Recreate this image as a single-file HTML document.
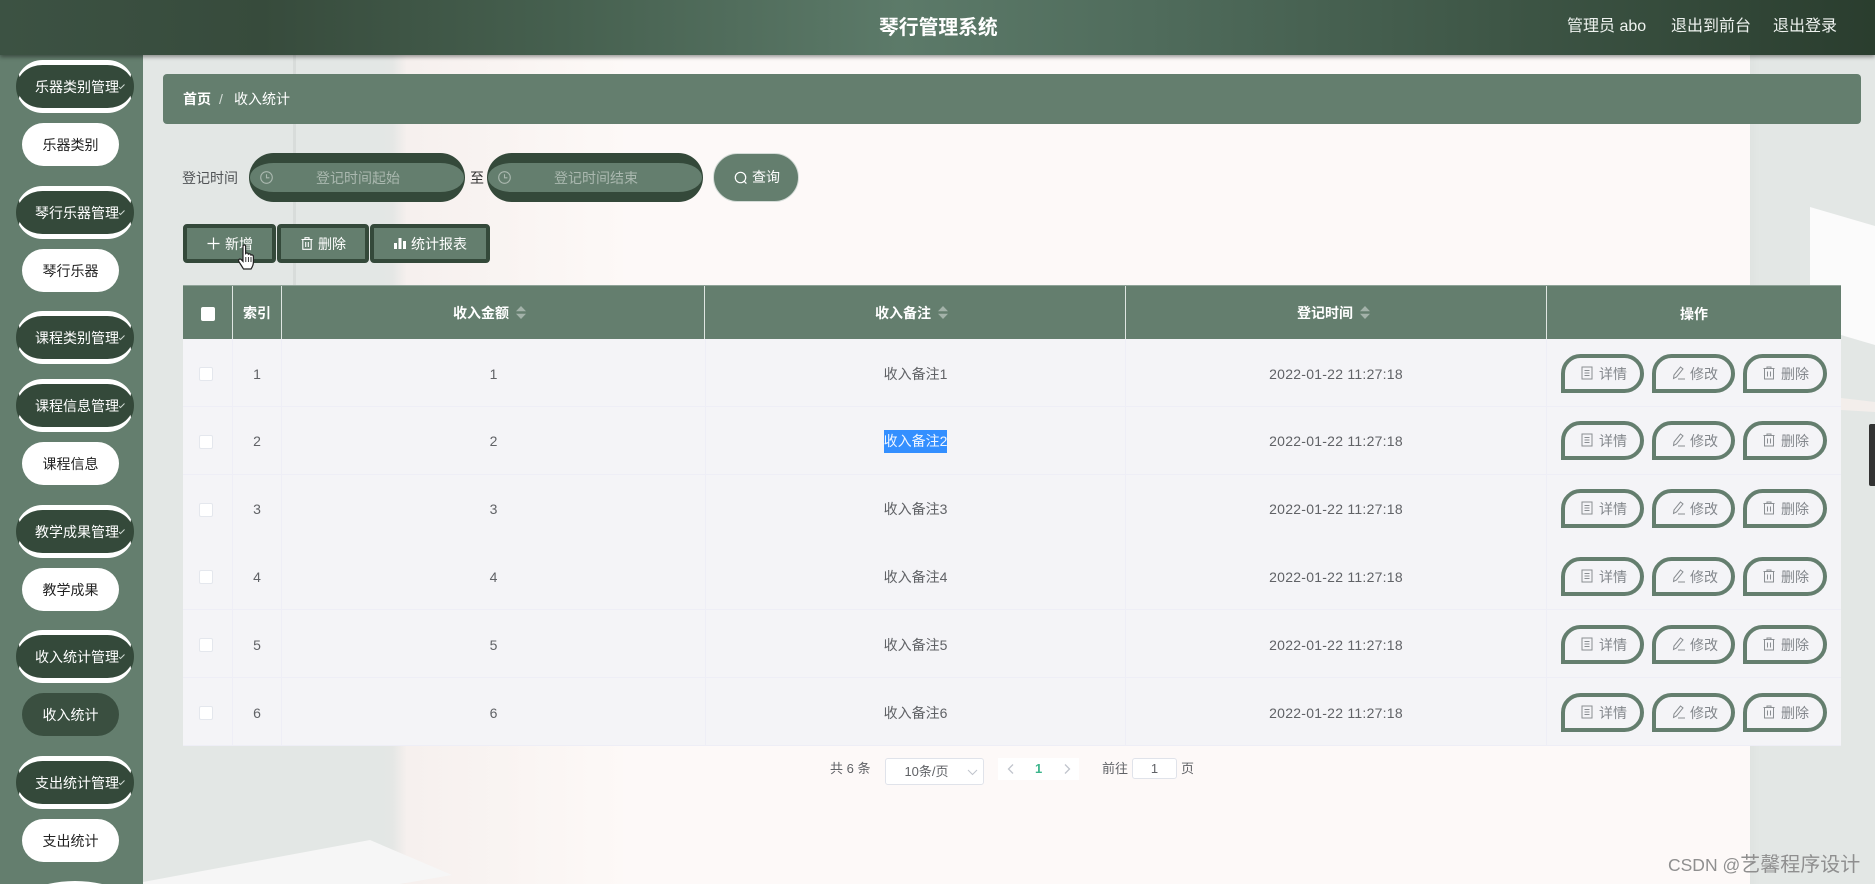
<!DOCTYPE html>
<html lang="zh">
<head>
<meta charset="utf-8">
<title>琴行管理系统</title>
<style>
*{box-sizing:border-box;margin:0;padding:0}
html,body{width:1875px;height:884px;overflow:hidden}
body{position:relative;font:14px/20px "Liberation Sans","Noto Sans CJK SC",sans-serif;color:#606266;background:#fdf9f8}
.abs,.bg,.h,.s,.t,.btn,.pill,.r,.c,.op,.cb,.hc{position:absolute}
.bg{display:block}
svg{display:block;position:absolute;overflow:visible}
.top{position:absolute;left:0;top:0;width:1875px;height:55px;background:linear-gradient(90deg,#3c5243 0,#374b3c 14%,#46604f 30%,#5c7a69 48%,#4f6b5b 62%,#3e5646 80%,#2a3d2e 100%);box-shadow:0 2px 4px rgba(0,0,0,.4);z-index:5}
.side{position:absolute;left:0;top:55px;width:143px;height:829px;background:#647e6e;z-index:4}
.h{left:16px;width:118px;height:53px;border-style:solid;border-width:5px 1px;border-color:#fff #34493a;border-radius:27px;background:#34493a;color:#fff;z-index:6;line-height:44px;padding-left:18px;white-space:nowrap;font-size:14px}
.h svg{left:102px;top:19px}
.s{left:22px;width:97px;height:43px;border-radius:22px;background:#fff;color:#222;text-align:center;line-height:44px;z-index:6}
.s.on{background:#3a4f40;color:#fff}
.t{white-space:nowrap;color:#fff;z-index:6}
.crumb{position:absolute;left:163px;top:74px;width:1698px;height:50px;border-radius:4px;background:#647e6e}
.pill{top:153px;width:216px;height:49px;border-style:solid;border-width:10px 1px;border-color:#34493a;border-radius:25px;background:#647e6e;color:#aab8af;line-height:31px;text-align:center}
.btn{top:224px;height:39px;background:#647e6e;border:4px solid #34493a;border-radius:4px;color:#fff}
.thead{position:absolute;left:183px;top:285px;width:1658px;height:54px;background:#647e6e;border-top:1px solid #8fa398}
.hc{top:17px;color:#fff;font-weight:bold;text-align:center;white-space:nowrap}
.vl{position:absolute;top:0;width:1px;height:54px;background:#dfe6e2}
.r{left:183px;width:1658px;height:68px;background-color:#f4f4f7;border-bottom:1px solid #eeeef6;background-image:linear-gradient(#eeeef6,#eeeef6),linear-gradient(#eeeef6,#eeeef6),linear-gradient(#eeeef6,#eeeef6),linear-gradient(#eeeef6,#eeeef6),linear-gradient(#eeeef6,#eeeef6);background-size:1px 100%;background-repeat:no-repeat;background-position:49px 0,98px 0,522px 0,942px 0,1363px 0}
.c{top:24.5px;text-align:center;white-space:nowrap;color:#606266;font-weight:normal}
.c1{left:50px;width:48px}.c2{left:99px;width:423px}.c3{left:523px;width:419px}.c4{left:943px;width:420px;letter-spacing:.25px}
.cb{left:16px;top:28px;width:14px;height:14px;background:#fff;border:1px solid #e4e7ed;border-radius:2px}
.op{top:14.5px;height:39px;border:4px solid #647e6e;border-radius:20px 20px 20px 0;color:#83878c;white-space:nowrap;line-height:32px;width:83px;padding-left:34px}
.op svg{left:16px;top:8px}
.o1{left:1378px}.o2{left:1469px}.o3{left:1560px;width:84px}
.sel{background:#338fff;color:#f0f6ff;padding:1px 0;line-height:21px;display:inline-block}
.pg{position:absolute;white-space:nowrap;color:#606266;font-size:13px}
.box{position:absolute;background:#fff;border:1px solid #e0e3ea;border-radius:3px;text-align:center;color:#606266;font-size:13px}
</style>
</head>
<body>

<!-- background -->
<div class="bg" style="left:143px;top:55px;width:240px;height:829px;background:#e3e7e5"></div>
<div class="bg" style="left:293px;top:55px;width:3px;height:230px;background:#d8dcda"></div>
<div class="bg" style="left:383px;top:55px;width:240px;height:829px;background:linear-gradient(90deg,#e3e7e5 0,#e5e7e5 4%,#f6f0ee 10%,#fdf9f7 100%)"></div>
<div class="bg" style="left:1750px;top:55px;width:125px;height:829px;background:linear-gradient(90deg,#dfe3e1,#e3e7e5 8%)"></div>
<svg style="left:0;top:0" width="1875" height="884">
  <polygon points="143,882 370,840 452,875 400,884 143,884" fill="#f6f6f6"/>
  <polygon points="1810,207 1875,226 1875,345 1841,335 1810,330" fill="#fbfbfb"/>
  <polygon points="1841,398 1875,402 1875,412 1841,410" fill="#f3eeeb"/>
</svg>

<!-- top bar -->
<div class="top"></div>
<div class="t" style="left:879px;top:16px;font-size:19.8px;font-weight:bold;line-height:24px">琴行管理系统</div>
<div class="t" style="left:1567px;top:16px;font-size:16px;line-height:22px;color:#eef2ef">管理员 abo</div>
<div class="t" style="left:1671px;top:16px;font-size:16px;line-height:22px;color:#eef2ef">退出到前台</div>
<div class="t" style="left:1773px;top:16px;font-size:16px;line-height:22px;color:#eef2ef">退出登录</div>

<!-- sidebar -->
<div class="side"></div>
<div class="h" style="top:60px">乐器类别管理<svg width="6" height="5"><path d="M0 3 L1.5 4.5 L5.5 0.5" fill="none" stroke="#cfd8d2" stroke-width="1"/></svg></div>
<div class="s" style="top:123px">乐器类别</div>
<div class="h" style="top:185.6px">琴行乐器管理<svg width="6" height="5"><path d="M0 3 L1.5 4.5 L5.5 0.5" fill="none" stroke="#cfd8d2" stroke-width="1"/></svg></div>
<div class="s" style="top:248.6px">琴行乐器</div>
<div class="h" style="top:311px">课程类别管理<svg width="6" height="5"><path d="M0 3 L1.5 4.5 L5.5 0.5" fill="none" stroke="#cfd8d2" stroke-width="1"/></svg></div>
<div class="h" style="top:378.5px">课程信息管理<svg width="6" height="5"><path d="M0 3 L1.5 4.5 L5.5 0.5" fill="none" stroke="#cfd8d2" stroke-width="1"/></svg></div>
<div class="s" style="top:442px">课程信息</div>
<div class="h" style="top:504.5px">教学成果管理<svg width="6" height="5"><path d="M0 3 L1.5 4.5 L5.5 0.5" fill="none" stroke="#cfd8d2" stroke-width="1"/></svg></div>
<div class="s" style="top:568px">教学成果</div>
<div class="h" style="top:630px">收入统计管理<svg width="6" height="5"><path d="M0 3 L1.5 4.5 L5.5 0.5" fill="none" stroke="#cfd8d2" stroke-width="1"/></svg></div>
<div class="s on" style="top:693px">收入统计</div>
<div class="h" style="top:755.6px">支出统计管理<svg width="6" height="5"><path d="M0 3 L1.5 4.5 L5.5 0.5" fill="none" stroke="#cfd8d2" stroke-width="1"/></svg></div>
<div class="s" style="top:818.6px">支出统计</div>
<svg style="left:16px;top:881px;z-index:6" width="118" height="3" viewBox="0 0 118 3"><path d="M32 3Q45 0 59 0Q73 0 86 3Z" fill="#fff"/></svg>

<!-- breadcrumb -->
<div class="crumb"></div>
<div class="t" style="left:183px;top:89px;font-weight:bold">首页</div>
<div class="t" style="left:219px;top:89px;color:#d5ddd8">/</div>
<div class="t" style="left:234px;top:89px">收入统计</div>

<!-- search -->
<div class="abs" style="left:182px;top:168px;color:#505355">登记时间</div>
<div class="pill" style="left:249px"><span style="position:relative;left:1px">登记时间起始</span>
  <svg style="left:10px;top:8px" width="13" height="13" viewBox="0 0 13 13"><circle cx="6.5" cy="6.5" r="5.8" fill="none" stroke="#aab8af" stroke-width="1.1"/><path d="M6.5 3.2V6.8H9.4" fill="none" stroke="#aab8af" stroke-width="1.1"/></svg></div>
<div class="abs" style="left:470px;top:168px;color:#333">至</div>
<div class="pill" style="left:487px"><span style="position:relative;left:1px">登记时间结束</span>
  <svg style="left:10px;top:8px" width="13" height="13" viewBox="0 0 13 13"><circle cx="6.5" cy="6.5" r="5.8" fill="none" stroke="#aab8af" stroke-width="1.1"/><path d="M6.5 3.2V6.8H9.4" fill="none" stroke="#aab8af" stroke-width="1.1"/></svg></div>
<div class="abs" style="left:713px;top:153px;width:86px;height:49px;border-radius:25px;background:#647e6e;border:1px solid #d5dcd8;color:#fff;line-height:47px;padding-left:38px">查询
  <svg style="left:20px;top:17px" width="14" height="14" viewBox="0 0 14 14"><circle cx="6.5" cy="6.5" r="5.2" fill="none" stroke="#fff" stroke-width="1.2"/><path d="M10.2 10.2L12.4 12.6" stroke="#fff" stroke-width="1.2"/></svg></div>

<!-- toolbar -->
<div class="btn" style="left:183px;width:93px"><span class="abs" style="left:38px;top:6px;white-space:nowrap">新增</span>
  <svg style="left:20px;top:9px" width="13" height="13" viewBox="0 0 13 13"><path d="M6.5 0.5V12.5M0.5 6.5H12.5" stroke="#fff" stroke-width="1.2"/></svg></div>
<div class="btn" style="left:277px;width:92px"><span class="abs" style="left:37px;top:6px;white-space:nowrap">删除</span>
  <svg style="left:20px;top:9px" width="12" height="13" viewBox="0 0 12 13"><path d="M0.5 2.5H11.5M4 2.5V0.7H8V2.5M1.8 2.5V12.3H10.2V2.5M4.7 5V10M7.3 5V10" fill="none" stroke="#fff" stroke-width="1.1"/></svg></div>
<div class="btn" style="left:370px;width:120px"><span class="abs" style="left:37px;top:6px;white-space:nowrap">统计报表</span>
  <svg style="left:20px;top:10px" width="12" height="11" viewBox="0 0 12 11"><path d="M0 5H3V11H0ZM4.5 0H7.5V11H4.5ZM9 3H12V11H9Z" fill="#fff"/></svg></div>

<!-- cursor -->
<svg style="left:238px;top:244px;z-index:9" width="20" height="26" viewBox="0 0 20 26"><path d="M5 2.2C5 .6 7.6 .6 7.6 2.2V9.5C8.4 8.7 10.2 9 10.4 10.2C11.3 9.5 12.9 9.9 13 11.1C14 10.6 15.4 11.1 15.4 12.5V18C15.4 21 14 23.5 13 25H5.5C4 22.5 2.4 20 .8 17.5C-.2 15.8 1.8 14.2 3.2 15.6L5 17.4Z" fill="#fff" stroke="#222" stroke-width="1.2"/><path d="M7.8 13V18M10.4 13V18M13 13V18" stroke="#222" stroke-width=".9"/></svg>

<!-- table head -->
<div class="thead">
  <div class="vl" style="left:49px"></div><div class="vl" style="left:98px"></div><div class="vl" style="left:521px"></div><div class="vl" style="left:942px"></div><div class="vl" style="left:1363px"></div>
  <div class="abs" style="left:18px;top:21px;width:14px;height:14px;background:#fff;border-radius:2px"></div>
  <div class="hc" style="left:60px">索引</div>
  <div class="hc" style="left:270px">收入金额<svg style="left:63px;top:3px" width="10" height="13" viewBox="0 0 10 13"><path d="M5 0L10 5.2H0ZM0 7.8H10L5 13Z" fill="#a3b2a9"/></svg></div>
  <div class="hc" style="left:692px">收入备注<svg style="left:63px;top:3px" width="10" height="13" viewBox="0 0 10 13"><path d="M5 0L10 5.2H0ZM0 7.8H10L5 13Z" fill="#a3b2a9"/></svg></div>
  <div class="hc" style="left:1114px">登记时间<svg style="left:63px;top:3px" width="10" height="13" viewBox="0 0 10 13"><path d="M5 0L10 5.2H0ZM0 7.8H10L5 13Z" fill="#a3b2a9"/></svg></div>
  <div class="hc" style="left:1497px;top:18px">操作</div>
</div>

<!-- rows -->
<div class="r" style="top:339px">
  <i class="cb"></i><b class="c c1">1</b><b class="c c2">1</b><b class="c c3">收入备注1</b><b class="c c4">2022-01-22 11:27:18</b>
  <div class="op o1"><svg width="12" height="14" viewBox="0 0 12 14"><path d="M1 1H11V13H1ZM3.5 4.5H8.5M3.5 7H8.5M3.5 9.5H8.5" fill="none" stroke="#8a8e92" stroke-width="1"/></svg>详情</div>
  <div class="op o2"><svg width="14" height="14" viewBox="0 0 14 14"><path d="M8.5 1L11 3L4.5 11L1.5 12.5L2 9ZM6 13H13" fill="none" stroke="#8a8e92" stroke-width="1"/></svg>修改</div>
  <div class="op o3"><svg width="12" height="14" viewBox="0 0 12 14"><path d="M0.5 2.5H11.5M4 2.5V1H8V2.5M1.5 2.5V13H10.5V2.5M4.5 5.5V10.5M7.5 5.5V10.5" fill="none" stroke="#8a8e92" stroke-width="1"/></svg>删除</div>
</div>
<div class="r" style="top:406.8px">
  <i class="cb"></i><b class="c c1">2</b><b class="c c2">2</b><b class="c c3" style="top:23px"><span class="sel">收入备注2</span></b><b class="c c4">2022-01-22 11:27:18</b>
  <div class="op o1"><svg width="12" height="14" viewBox="0 0 12 14"><path d="M1 1H11V13H1ZM3.5 4.5H8.5M3.5 7H8.5M3.5 9.5H8.5" fill="none" stroke="#8a8e92" stroke-width="1"/></svg>详情</div>
  <div class="op o2"><svg width="14" height="14" viewBox="0 0 14 14"><path d="M8.5 1L11 3L4.5 11L1.5 12.5L2 9ZM6 13H13" fill="none" stroke="#8a8e92" stroke-width="1"/></svg>修改</div>
  <div class="op o3"><svg width="12" height="14" viewBox="0 0 12 14"><path d="M0.5 2.5H11.5M4 2.5V1H8V2.5M1.5 2.5V13H10.5V2.5M4.5 5.5V10.5M7.5 5.5V10.5" fill="none" stroke="#8a8e92" stroke-width="1"/></svg>删除</div>
</div>
<div class="r" style="top:474.6px">
  <i class="cb"></i><b class="c c1">3</b><b class="c c2">3</b><b class="c c3">收入备注3</b><b class="c c4">2022-01-22 11:27:18</b>
  <div class="op o1"><svg width="12" height="14" viewBox="0 0 12 14"><path d="M1 1H11V13H1ZM3.5 4.5H8.5M3.5 7H8.5M3.5 9.5H8.5" fill="none" stroke="#8a8e92" stroke-width="1"/></svg>详情</div>
  <div class="op o2"><svg width="14" height="14" viewBox="0 0 14 14"><path d="M8.5 1L11 3L4.5 11L1.5 12.5L2 9ZM6 13H13" fill="none" stroke="#8a8e92" stroke-width="1"/></svg>修改</div>
  <div class="op o3"><svg width="12" height="14" viewBox="0 0 12 14"><path d="M0.5 2.5H11.5M4 2.5V1H8V2.5M1.5 2.5V13H10.5V2.5M4.5 5.5V10.5M7.5 5.5V10.5" fill="none" stroke="#8a8e92" stroke-width="1"/></svg>删除</div>
</div>
<div class="r" style="top:542.4px">
  <i class="cb"></i><b class="c c1">4</b><b class="c c2">4</b><b class="c c3">收入备注4</b><b class="c c4">2022-01-22 11:27:18</b>
  <div class="op o1"><svg width="12" height="14" viewBox="0 0 12 14"><path d="M1 1H11V13H1ZM3.5 4.5H8.5M3.5 7H8.5M3.5 9.5H8.5" fill="none" stroke="#8a8e92" stroke-width="1"/></svg>详情</div>
  <div class="op o2"><svg width="14" height="14" viewBox="0 0 14 14"><path d="M8.5 1L11 3L4.5 11L1.5 12.5L2 9ZM6 13H13" fill="none" stroke="#8a8e92" stroke-width="1"/></svg>修改</div>
  <div class="op o3"><svg width="12" height="14" viewBox="0 0 12 14"><path d="M0.5 2.5H11.5M4 2.5V1H8V2.5M1.5 2.5V13H10.5V2.5M4.5 5.5V10.5M7.5 5.5V10.5" fill="none" stroke="#8a8e92" stroke-width="1"/></svg>删除</div>
</div>
<div class="r" style="top:610.2px">
  <i class="cb"></i><b class="c c1">5</b><b class="c c2">5</b><b class="c c3">收入备注5</b><b class="c c4">2022-01-22 11:27:18</b>
  <div class="op o1"><svg width="12" height="14" viewBox="0 0 12 14"><path d="M1 1H11V13H1ZM3.5 4.5H8.5M3.5 7H8.5M3.5 9.5H8.5" fill="none" stroke="#8a8e92" stroke-width="1"/></svg>详情</div>
  <div class="op o2"><svg width="14" height="14" viewBox="0 0 14 14"><path d="M8.5 1L11 3L4.5 11L1.5 12.5L2 9ZM6 13H13" fill="none" stroke="#8a8e92" stroke-width="1"/></svg>修改</div>
  <div class="op o3"><svg width="12" height="14" viewBox="0 0 12 14"><path d="M0.5 2.5H11.5M4 2.5V1H8V2.5M1.5 2.5V13H10.5V2.5M4.5 5.5V10.5M7.5 5.5V10.5" fill="none" stroke="#8a8e92" stroke-width="1"/></svg>删除</div>
</div>
<div class="r" style="top:678px">
  <i class="cb"></i><b class="c c1">6</b><b class="c c2">6</b><b class="c c3">收入备注6</b><b class="c c4">2022-01-22 11:27:18</b>
  <div class="op o1"><svg width="12" height="14" viewBox="0 0 12 14"><path d="M1 1H11V13H1ZM3.5 4.5H8.5M3.5 7H8.5M3.5 9.5H8.5" fill="none" stroke="#8a8e92" stroke-width="1"/></svg>详情</div>
  <div class="op o2"><svg width="14" height="14" viewBox="0 0 14 14"><path d="M8.5 1L11 3L4.5 11L1.5 12.5L2 9ZM6 13H13" fill="none" stroke="#8a8e92" stroke-width="1"/></svg>修改</div>
  <div class="op o3"><svg width="12" height="14" viewBox="0 0 12 14"><path d="M0.5 2.5H11.5M4 2.5V1H8V2.5M1.5 2.5V13H10.5V2.5M4.5 5.5V10.5M7.5 5.5V10.5" fill="none" stroke="#8a8e92" stroke-width="1"/></svg>删除</div>
</div>

<!-- pagination -->
<div class="pg" style="left:830px;top:759px">共 6 条</div>
<div class="box" style="left:885px;top:758px;width:99px;height:27px;line-height:25px;padding-right:16px">10条/页
  <svg style="left:81px;top:10px" width="11" height="7" viewBox="0 0 11 7"><path d="M1 1L5.5 5.5L10 1" fill="none" stroke="#c0c4cc" stroke-width="1"/></svg></div>
<div class="abs" style="left:998px;top:758px;width:81px;height:22px;background:#fff"></div>
<svg style="left:1007px;top:764px" width="7" height="10" viewBox="0 0 7 10"><path d="M6 .5L1.5 5L6 9.5" fill="none" stroke="#c0c4cc" stroke-width="1.3"/></svg>
<div class="pg" style="left:1035px;top:759px;font-weight:bold;color:#3db58c">1</div>
<svg style="left:1064px;top:764px" width="7" height="10" viewBox="0 0 7 10"><path d="M1 .5L5.5 5L1 9.5" fill="none" stroke="#c0c4cc" stroke-width="1.3"/></svg>
<div class="pg" style="left:1102px;top:759px">前往</div>
<div class="box" style="left:1132px;top:758px;width:45px;height:21px;line-height:19px">1</div>
<div class="pg" style="left:1181px;top:759px">页</div>

<!-- scrollbar sliver + watermark -->
<div class="abs" style="left:1869px;top:424px;width:6px;height:62px;background:#333;border-radius:2px 0 0 2px"></div>
<div class="abs" style="left:1668px;top:853px;color:#8f8f8f;font-size:17.5px;line-height:24px;white-space:nowrap;z-index:9">CSDN @<span style="font-size:20px">艺馨程序设计</span></div>

</body>
</html>
